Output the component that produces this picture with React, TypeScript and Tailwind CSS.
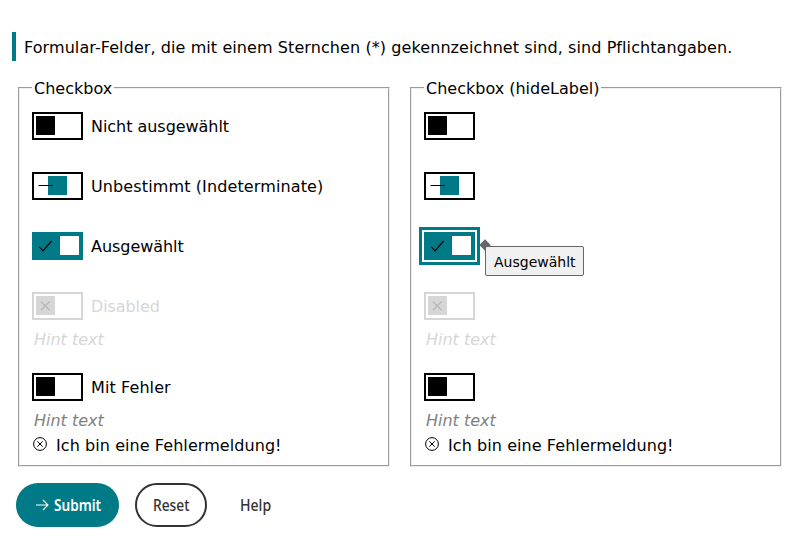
import type { ReactNode } from "react";

type State = "off" | "mixed" | "on" | "disabled";

function Switch({ state, focused = false }: { state: State; focused?: boolean }) {
  const frame =
    state === "on"
      ? "border-[#007a87] bg-[#007a87]"
      : state === "disabled"
        ? "border-[#d6d6d6] bg-white"
        : "border-black bg-white";
  const knob = {
    off: "ml-0 bg-black",
    mixed: "ml-3 bg-[#007a87]",
    on: "ml-6 bg-white",
    disabled: "ml-0 bg-[#d6d6d6]",
  }[state];
  return (
    <span
      className={`relative block h-7 w-[51px] shrink-0 border-2 p-0.5 ${frame} ${
        focused ? "outline-3 outline-offset-2 outline-[#007a87]" : ""
      }`}
    >
      <span className={`block size-[19px] ${knob}`} />
      <svg
        className={`absolute -top-0.5 -left-0.5 ${state === "disabled" ? "text-[#b4b4b4]" : "text-black"}`}
        width="51"
        height="28"
        fill="none"
        stroke="currentColor"
        strokeWidth="1.2"
      >
        {state === "mixed" && <path d="M6.5 13.5h14.5" strokeWidth="1" />}
        {state === "on" && <path d="M7.3 14.8l3.7 4L19.6 9" />}
        {state === "disabled" && <path d="M9 9.6l8.6 8.6M17.6 9.6L9 18.2" />}
      </svg>
    </span>
  );
}

function Row({
  state,
  label,
  tracking = "",
  children,
}: {
  state: State;
  label?: string;
  tracking?: string;
  children?: ReactNode;
}) {
  return (
    <div className="flex h-7 items-center gap-2">
      {children ?? <Switch state={state} />}
      {label && (
        <span className={`h-7 leading-[30px] ${tracking} ${state === "disabled" ? "text-[#d6d6d6]" : ""}`}>
          {label}
        </span>
      )}
    </div>
  );
}

function Group({ legend, labels = false, children }: { legend: string; labels?: boolean; children?: ReactNode }) {
  return (
    <fieldset className="h-[389px] w-[372px] border-2 border-[#eeeeee] px-3 [border-style:groove]">
      <legend className="h-5 px-0.5 leading-[22px]">{legend}</legend>
      <div className="flex flex-col pt-[14px]">
        <Row state="off" label={labels ? "Nicht ausgewählt" : undefined} tracking="tracking-[-0.04px]" />
        <div className="mt-8">
          <Row
            state="mixed"
            label={labels ? "Unbestimmt (Indeterminate)" : undefined}
            tracking="tracking-[0.12px]"
          />
        </div>
        <div className="mt-8">
          <Row state="on" label={labels ? "Ausgewählt" : undefined} tracking="tracking-[-0.05px]">
            {children}
          </Row>
        </div>
        <div className="mt-8">
          <Row state="disabled" label={labels ? "Disabled" : undefined} tracking="tracking-[-0.1px]" />
          <p className="mt-2 ml-0.5 h-6 leading-6 text-[#d6d6d6] italic">Hint text</p>
        </div>
        <div className="mt-[21px]">
          <Row state="off" label={labels ? "Mit Fehler" : undefined} tracking="tracking-[0.1px]" />
          <p className="mt-2 ml-0.5 h-6 leading-6 text-[#808080] italic">Hint text</p>
          <p className="mt-px ml-px flex h-6 leading-6">
            <svg className="mt-[3px]" width="15" height="15" fill="none" stroke="black" strokeWidth="1">
              <circle cx="7" cy="7" r="6.4" />
              <path d="M4.3 4.3l5.4 5.4M9.7 4.3L4.3 9.7" />
            </svg>
            <span className="ml-2 tracking-[0.07px]">Ich bin eine Fehlermeldung!</span>
          </p>
        </div>
      </div>
    </fieldset>
  );
}

export default function App() {
  return (
    <main className="h-[543px] w-[800px] overflow-hidden bg-white pt-8 font-['DejaVu_Sans',sans-serif] text-[16px] whitespace-nowrap text-black">
      <p className="ml-3 h-[29px] border-l-4 border-[#007a87] pl-2 leading-[31px] tracking-[0.083px]">
        Formular-Felder, die mit einem Sternchen (*) gekennzeichnet sind, sind Pflichtangaben.
      </p>
      <div className="mt-[17px] ml-[18px] flex gap-5">
        <Group legend="Checkbox" labels />
        <Group legend="Checkbox (hideLabel)">
          <span className="relative block">
            <Switch state="on" focused />
            <span className="absolute top-[9px] left-[57px] size-2 rotate-45 bg-[#666]" />
            <span
              role="tooltip"
              className="absolute top-[14px] left-[61px] flex h-[30px] w-[99px] items-center rounded-[2px] border border-[#666] bg-[#f0f0f0] pt-[3px] pl-2 text-[14px]"
            >
              Ausgewählt
            </span>
          </span>
        </Group>
      </div>
      <div className="mt-4 ml-4 flex h-11 font-['Noto_Sans',sans-serif] text-[16px] font-medium text-[#333]">
        <button className="flex w-[103px] items-center rounded-full bg-[#007a87] pl-5 font-semibold text-white">
          <svg className="mr-[5px]" width="13" height="12" fill="none" stroke="white" strokeWidth="1.1">
            <path d="M0 6h12M7 1l5 5-5 5" />
          </svg>
          <span className="origin-left scale-x-[0.85]">Submit</span>
        </button>
        <button className="ml-4 flex w-[72px] items-center justify-center rounded-full border-2 border-[#333]">
          <span className="scale-x-[0.86]">Reset</span>
        </button>
        <button className="ml-[33px] flex items-center">
          <span className="origin-left scale-x-[0.88]">Help</span>
        </button>
      </div>
    </main>
  );
}
